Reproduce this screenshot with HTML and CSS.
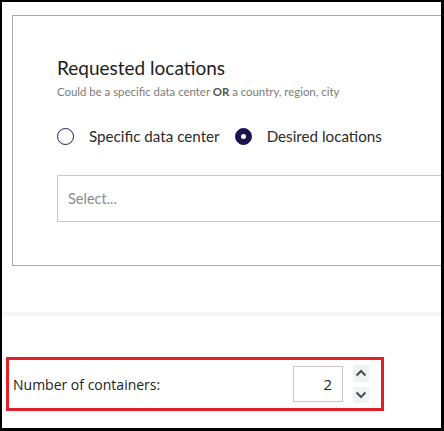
FILE: index.html
```html
<!DOCTYPE html>
<html>
<head>
<meta charset="utf-8">
<link rel="stylesheet" href="styles.css">
</head>
<body>
<div class="frame">
  <section class="card">
    <h2 class="title">Requested locations</h2>
    <p class="hint">Could be a specific data center <b>OR</b> a country, region, city</p>
    <div class="radios">
      <label class="radio"><span class="dot"></span><span class="rlabel">Specific data center</span></label>
      <label class="radio"><span class="dot checked"></span><span class="rlabel">Desired locations</span></label>
    </div>
    <div class="select"><span class="placeholder">Select...</span></div>
  </section>
  <div class="separator"></div>
  <div class="highlight">
    <span class="count-label">Number of containers:</span>
    <div class="number-box">2</div>
    <div class="spinner">
      <span class="spin-btn">
        <svg width="16" height="17" viewBox="0 0 16 17"><path d="M3.5 10.5 L8 6 L12.5 10.5" fill="none" stroke="#4a4f55" stroke-width="2"/></svg>
      </span>
      <span class="spin-btn">
        <svg width="16" height="16" viewBox="0 0 16 16"><path d="M3.5 5.5 L8 10 L12.5 5.5" fill="none" stroke="#4a4f55" stroke-width="2"/></svg>
      </span>
    </div>
  </div>
</div>
</body>
</html>
```
FILE: styles.css
```css
* { box-sizing: border-box; }
html, body { margin: 0; padding: 0; background: #fff; }
.frame {
  width: 444px;
  height: 431px;
  border-style: solid;
  border-color: #000;
  border-width: 2px 3px 3px 2px;
  overflow: hidden;
  background: #fff;
  display: flex;
  flex-direction: column;
}
.card {
  margin: 13px 0 0 10px;
  width: 460px;
  height: 251px;
  flex: none;
  border: 1px solid #a8a8a8;
  padding: 40px 0 0 44px;
  font-family: Lato, "Open Sans", sans-serif;
}
.title {
  margin: 0;
  font-size: 19px;
  font-weight: 400;
  line-height: 24px;
  color: #1c1c1c;
}
.hint {
  margin: 5px 0 0 0;
  font-size: 11.4px;
  line-height: 14px;
  color: #7b7b7b;
}
.hint b { color: #555; font-weight: 700; }
.radios {
  display: flex;
  align-items: center;
  margin-top: 26px;
  height: 22px;
}
.radio {
  display: flex;
  align-items: center;
  margin-right: 15px;
}
.dot {
  width: 17px;
  height: 17px;
  border-radius: 50%;
  border: 1.5px solid #1f1a52;
  display: inline-block;
  flex: none;
  margin-right: 15px;
  position: relative;
}
.dot.checked {
  background: #1a154e;
  border-color: #1a154e;
}
.dot.checked::after {
  content: "";
  position: absolute;
  left: 50%;
  top: 50%;
  width: 5px;
  height: 5px;
  margin: -2.5px 0 0 -2.5px;
  border-radius: 50%;
  background: #fff;
}
.rlabel {
  font-size: 15.2px;
  color: #2a2a2a;
}
.select {
  margin-top: 28px;
  height: 47px;
  border: 1px solid #c8c8c8;
  display: flex;
  align-items: center;
  padding-left: 10px;
}
.placeholder {
  font-size: 14.5px;
  color: #8a8a8a;
}
.separator {
  margin: 46px 0 0 1px;
  height: 4px;
  background: #f5f6f8;
  flex: none;
}
.highlight {
  margin: 41px 0 0 4px;
  width: 378px;
  height: 54px;
  border: 3px solid #e21f26;
  display: flex;
  align-items: center;
  padding-left: 4px;
  font-family: "Open Sans", sans-serif;
}
.count-label {
  font-size: 14px;
  color: #222;
  flex: 1;
}
.number-box {
  width: 50px;
  height: 36px;
  border: 1px solid #c8c8c8;
  text-align: right;
  padding-right: 10px;
  font-size: 15px;
  line-height: 34px;
  color: #222;
}
.spinner {
  display: flex;
  flex-direction: column;
  gap: 5px;
  margin: 0 12px 0 10px;
}
.spin-btn {
  display: block;
  width: 16px;
  background: #f1f2f3;
  line-height: 0;
}
```
